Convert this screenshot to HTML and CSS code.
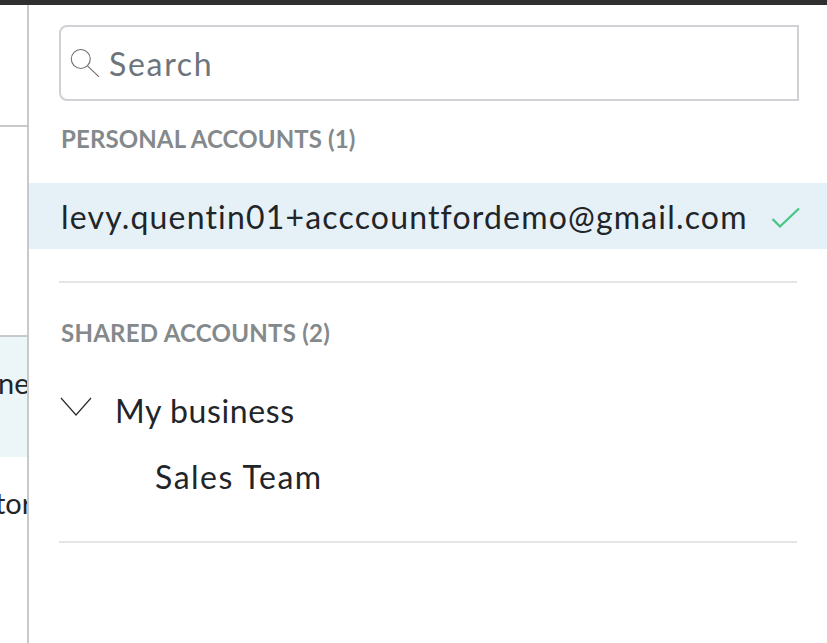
FILE: index.html
```html
<!DOCTYPE html>
<html lang="en">
<head>
    <meta charset="UTF-8">
    <meta name="viewport" content="width=device-width, initial-scale=1.0">
    <title>Accounts</title>
    <link rel="stylesheet" href="styles.css">
</head>
<body>
    <div class="topbar"></div>
    <div class="layout">
        <div class="sidebar">
            <div class="sidebar-head"></div>
            <div class="sidebar-block"></div>
            <div class="sidebar-item active"><span>ne</span></div>
            <div class="sidebar-item"><span class="cut">tor</span></div>
        </div>

        <div class="panel">
            <div class="search">
                <svg class="search-icon" width="30" height="30" viewBox="0 0 30 30">
                    <circle cx="10.8" cy="11" r="9.5"/>
                    <path d="M17.5 17.8L29 28.8"/>
                </svg>
                <input type="text" placeholder="Search">
            </div>

            <h3 class="section-title personal">PERSONAL ACCOUNTS (1)</h3>
            <div class="account selected">
                <span class="email">levy.quentin01+acccountfordemo@gmail.com</span>
                <svg class="check" width="30" height="22" viewBox="0 0 30 22">
                    <path d="M1.5 12L9 19.5L28 1.5"/>
                </svg>
            </div>
            <div class="divider"></div>

            <h3 class="section-title shared">SHARED ACCOUNTS (2)</h3>
            <div class="account group">
                <svg class="chevron" width="32" height="20" viewBox="0 0 32 20">
                    <path d="M1 1L16 18L31 1"/>
                </svg>
                <span class="business">My business</span>
            </div>
            <div class="account child"><span class="team">Sales Team</span></div>
            <div class="divider last"></div>
        </div>
    </div>
</body>
</html>
```
FILE: styles.css
```css
* {
    box-sizing: border-box;
}
body {
    margin: 0;
    height: 643px;
    overflow: hidden;
    background-color: #fff;
    color: #1f2529;
    font-family: Lato, sans-serif;
    font-size: 32px;
}
.topbar {
    height: 5px;
    background-color: #302f30;
}
.layout {
    display: flex;
    height: 638px;
}
.sidebar {
    flex: none;
    width: 29px;
    overflow: hidden;
    border-right: 2px solid #c8c9ca;
}
.sidebar-head {
    height: 122px;
    border-bottom: 2px solid #c8c9ca;
}
.sidebar-block {
    height: 210px;
    border-bottom: 2px solid #c8c9ca;
}
.sidebar-item {
    height: 120px;
    padding-top: 28px;
    font-size: 29px;
    line-height: 36px;
    white-space: nowrap;
}
.sidebar-item.active {
    background-color: #ecf5f8;
}
.sidebar-item span {
    margin-left: -2px;
}
.sidebar-item .cut {
    margin-left: -5px;
}
.panel {
    flex: 1;
    min-width: 0;
}
.search {
    display: flex;
    align-items: center;
    width: 740px;
    height: 76px;
    margin: 20px 0 0 30px;
    padding-left: 9px;
    border: 2px solid #d0d1d5;
    border-radius: 8px 0 0 8px;
}
.search-icon {
    flex: none;
    fill: none;
    stroke: #707070;
    stroke-width: 1.1;
}
.search input {
    width: 600px;
    margin-left: 9px;
    padding: 0;
    border: none;
    outline: none;
    font: inherit;
    letter-spacing: 1.7px;
}
.search input::placeholder {
    color: #6d747c;
    opacity: 1;
}
.section-title {
    margin: 0 0 0 32px;
    color: #84898c;
    font-size: 24px;
    font-weight: bold;
    line-height: 30px;
}
.section-title.personal {
    margin-top: 23px;
    margin-bottom: 29px;
    letter-spacing: 0.12px;
}
.section-title.shared {
    margin-top: 35px;
    margin-bottom: 29px;
    letter-spacing: 0.26px;
}
.account {
    display: flex;
    align-items: center;
    height: 66px;
    padding-left: 32px;
    white-space: nowrap;
}
.selected {
    background-color: #e5f1f7;
}
.email {
    width: 685px;
    letter-spacing: 1.18px;
}
.check {
    flex: none;
    margin: 3px 0 0 25px;
    fill: none;
    stroke: #48c585;
    stroke-width: 2.3;
}
.divider {
    width: 738px;
    height: 2px;
    margin: 32px 0 0 30px;
    background-color: #e4e5e6;
}
.divider.last {
    margin-top: 32px;
}
.group {
    padding-left: 31px;
}
.chevron {
    flex: none;
    margin: -7px 23px 0 0;
    fill: none;
    stroke: #2a2d30;
    stroke-width: 1.2;
}
.business {
    letter-spacing: 0.6px;
}
.child {
    padding-left: 126px;
}
.team {
    letter-spacing: 1.5px;
}
```
